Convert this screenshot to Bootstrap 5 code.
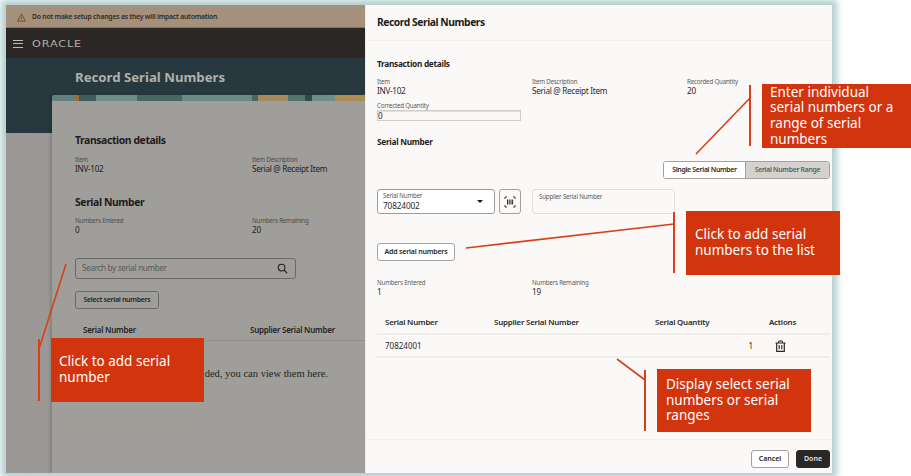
<!doctype html>
<html lang="en">
<head>
<meta charset="utf-8">
<title>Record Serial Numbers</title>
<link href="https://cdn.jsdelivr.net/npm/bootstrap@5.3.0/dist/css/bootstrap.min.css" rel="stylesheet">
<style>
html,body{margin:0;height:476px;overflow:hidden;background:#fff}
body{font-family:"Noto Sans","Open Sans",sans-serif;color:#2b2826}
.stage{position:relative;width:911px;height:476px;overflow:hidden;padding:5px 0 3px 6px}
.frame{width:826px;height:468px;box-shadow:0 0 7px 5px #b1cdcd;background:#fbf9f8}
.pagepane{width:359px;background:#9b9795;background-image:repeating-radial-gradient(circle at 40px 350px,rgba(255,255,255,.016) 0 1px,transparent 1px 3px);overflow:hidden}
.warnbar{height:23px;background:#a4907b;color:#2e2a26;font-size:6.8px;letter-spacing:-.2px;font-weight:600;padding:2px 0 0 11px;gap:6px;border-bottom:1px solid #857462}
.warnbar svg{width:9px;height:9px}
.oraclebar{height:30px;background:#2b2724;padding:1px 0 0 7px;gap:9px}
.burger{width:10px;height:8px;border-top:1px solid #bdbbb8;border-bottom:1px solid #bdbbb8}
.burger::after{content:"";display:block;height:1px;background:#bdbbb8;margin-top:2.5px}
.wordmark{font-family:"DejaVu Sans",sans-serif;font-size:8.6px;letter-spacing:.7px;color:#b4b2af;line-height:10px;display:inline-block;transform:scaleX(1.3);transform-origin:left center}
.herozone{height:75px;background:#27393e;padding:9px 0 0 69px}
.herotitle{color:#b1b0ab;font-size:13.2px;font-weight:700;line-height:20px;margin:0}
.sheet{margin:-38px 0 0 46px;height:378px;background:#a09e9b;box-shadow:-2px 0 3px rgba(0,0,0,.15);padding-left:23px;border-radius:3px 0 0 0;overflow:hidden}
.strip{height:6px;margin-left:-23px;background:linear-gradient(90deg,#62807b 0 24px,#a8642f 24px 27px,#3f5c5c 27px 44px,#6f8d86 44px 85px,#4a6663 85px 130px,#6c8a83 130px 200px,#4a6663 200px 206px,#a58b5c 206px 236px,#557370 236px 253px,#2f4a4c 253px 260px,#6f8d86 260px 283px,#ad8f55 283px 100%)}
.bighead{font-size:10.4px;letter-spacing:-.4px;font-weight:700;line-height:14px;margin:32px 0 0;color:#1d1b1a}
.tri{display:grid}
.tri-left{grid-template-columns:177px 1fr;margin-top:8px}
.tri-right{grid-template-columns:155px 155px 1fr}
.lbl{font-size:6.2px;letter-spacing:-.2px;line-height:9px;color:#5c5a58}
.val{font-size:8.2px;letter-spacing:-.3px;line-height:10px;color:#2b2826}
.sheet .lbl{color:#4e4c4a}
.sheet .val{color:#242220}
.bighead-next{margin-top:21px}
.tri-gap{margin-top:7px}
.searchbox{width:221px;height:21px;margin-top:23px;border:1px solid #6c6a68;border-radius:3px;padding:0 7px 0 6px;font-size:8.2px;letter-spacing:-.35px;color:#5a5856}
.searchbox svg{width:11px;height:11px}
.ghostbtn{font-family:inherit;background:transparent;border:1px solid #6c6a68;border-radius:3px;font-size:7px;letter-spacing:-.3px;font-weight:600;height:18px;width:84px;padding:0;color:#242220;margin-top:12px}
.sheethead{margin-top:11px;padding:0 0 0 8px;border-bottom:1px solid #939190;height:21px;font-size:8px;letter-spacing:-.25px;font-weight:600;color:#242220}
.sheethead span:first-child{width:167px}
.emptynote{font-family:"Liberation Serif",serif;font-size:10.5px;line-height:12px;margin-top:27px;text-align:right;padding-right:37px;color:#242220}
.drawerpane{flex:1;background:#fbf9f8;border-left:1px solid #eeebe8;min-width:0}
.drawerhead{height:36px;border-bottom:1px solid #f3f0ed;padding-left:11px;font-size:10.3px;letter-spacing:-.45px;font-weight:700;color:#1d1b1a}
.drawerbody{padding:17px 2px 0 11px;flex:1}
.smallhead{font-size:8.3px;letter-spacing:-.3px;font-weight:700;line-height:12px;margin:0;color:#1f1d1c}
.infogap{margin-top:7px}
.qtylabel{margin-top:5px}
.qtybox{width:144px;height:11px;border:1px solid #cfccc9;box-shadow:inset 0 1px 1px #ddd;font-size:8.2px;line-height:10px;color:#2b2826}
.smallhead-next{margin-top:15px}
.segwrap{height:18px;margin-top:13px;border:1px solid #a3a19f;border-radius:3px;width:167px;overflow:hidden;font-size:6.9px;letter-spacing:-.3px;font-weight:600}
.segwrap>div{display:flex;align-items:center;justify-content:center}
.segon{width:82px;background:#fff;color:#2b2826;border-right:1px solid #a3a19f}
.segoff{flex:1;background:#d4d1ce;color:#605e5c}
.fieldrow{margin-top:10px}
.selbox{width:118px;height:25px;background:#fff;border:1px solid #9f9d9b;border-radius:3px;padding:0 11px 0 5px}
.selbox .lbl{line-height:8px}
.selbox .val{font-size:8.2px;letter-spacing:-.1px;line-height:11px}
.caret{width:0;height:0;border-left:3px solid transparent;border-right:3px solid transparent;border-top:3px solid #1d1b1a}
.scanbtn{width:22px;height:25px;margin-left:4px;background:#fbf9f8;border:1px solid #a3a19f;border-radius:3px}
.scanbtn svg{width:12px;height:12px}
.supbox{width:143px;height:25px;margin-left:11px;background:#fbf9f8;border:1px solid #e2dfdc;border-radius:3px;padding:2px 6px}
.addbtn{font-family:inherit;display:block;width:78px;height:18px;padding:0;margin-top:29px;background:#fff;border:1px solid #a3a19f;border-radius:3px;font-size:7px;letter-spacing:-.2px;font-weight:600;color:#2b2826}
.countrow{margin-top:17px}
.datatable{width:453px;margin:13px 0 0;table-layout:fixed;font-size:8px;color:#2b2826;--bs-table-bg:transparent}
.datatable th,.datatable td{padding:0 0 0 8px;border-bottom:2px solid #f0edea;vertical-align:middle;box-shadow:none}
.datatable th{height:24px;font-weight:600;font-size:7.9px;letter-spacing:-.2px;padding-top:2px}
.datatable td{height:23px;padding-top:1px}
.datatable td.qtycell{padding-right:8px}
.datatable td svg{width:11px;height:12px;display:block;margin-left:6px}
.drawerfoot{height:34px;border-top:1px solid #f3f0ed;padding:10px 2px 0 0;gap:7px}
.cancelbtn,.donebtn{font-family:inherit;height:18px;padding:0;border-radius:3px;font-size:7px;font-weight:600}
.cancelbtn{width:38px;background:#fff;border:1px solid #a3a19f;color:#2b2826}
.donebtn{width:34px;background:#2b2724;border:1px solid #2b2724;color:#e6e3e0}
.callout{position:absolute;background:#d2350e;color:#fff;font-size:13.5px;line-height:15.7px;display:flex;flex-direction:column;justify-content:center;padding-left:8px}
.call-a{left:51px;top:338px;width:153px;height:64px}
.call-b{left:762px;top:84px;width:149px;height:64px}
.call-c{left:686px;top:211px;width:154px;height:64px;padding-left:9px}
.call-d{left:657px;top:369px;width:154px;height:63px;padding-left:9px}
.leaders{position:absolute;left:0;top:0;width:911px;height:476px;pointer-events:none}
</style>
</head>
<body>
<div class="stage">
  <div class="frame d-flex">
    <div class="pagepane d-flex flex-column flex-shrink-0">
      <div class="warnbar d-flex align-items-center">
        <svg viewBox="0 0 10 10"><path d="M5 1 9.4 9H.6Z" fill="none" stroke="#7e4c1e" stroke-width="1.1"/><path d="M5 4v2.6M5 7.3v.8" stroke="#7e4c1e" stroke-width=".9"/></svg>
        <span>Do not make setup changes as they will impact automation</span>
      </div>
      <div class="oraclebar d-flex align-items-center">
        <div class="burger"></div>
        <span class="wordmark">ORACLE</span>
      </div>
      <div class="herozone"><h1 class="herotitle">Record Serial Numbers</h1></div>
      <div class="sheet">
        <div class="strip"></div>
        <h2 class="bighead">Transaction details</h2>
        <div class="tri tri-left">
          <div><div class="lbl">Item</div><div class="val">INV-102</div></div>
          <div><div class="lbl">Item Description</div><div class="val">Serial @ Receipt Item</div></div>
        </div>
        <h2 class="bighead bighead-next">Serial Number</h2>
        <div class="tri tri-left tri-gap">
          <div><div class="lbl">Numbers Entered</div><div class="val">0</div></div>
          <div><div class="lbl">Numbers Remaining</div><div class="val">20</div></div>
        </div>
        <div class="searchbox d-flex align-items-center justify-content-between">
          <span>Search by serial number</span>
          <svg viewBox="0 0 12 12"><circle cx="5" cy="5" r="3.7" fill="none" stroke="#242220" stroke-width="1.2"/><path d="m7.8 7.8 3.2 3.2" stroke="#242220" stroke-width="1.4"/></svg>
        </div>
        <button type="button" class="ghostbtn">Select serial numbers</button>
        <div class="sheethead d-flex align-items-center"><span>Serial Number</span><span>Supplier Serial Number</span></div>
        <p class="emptynote">ded, you can view them here.</p>
      </div>
    </div>
    <div class="drawerpane d-flex flex-column">
      <div class="drawerhead d-flex align-items-center">Record Serial Numbers</div>
      <div class="drawerbody">
        <h2 class="smallhead">Transaction details</h2>
        <div class="tri tri-right infogap">
          <div><div class="lbl">Item</div><div class="val">INV-102</div></div>
          <div><div class="lbl">Item Description</div><div class="val">Serial @ Receipt Item</div></div>
          <div><div class="lbl">Recorded Quantity</div><div class="val">20</div></div>
        </div>
        <div class="lbl qtylabel">Corrected Quantity</div>
        <div class="qtybox">0</div>
        <h2 class="smallhead smallhead-next">Serial Number</h2>
        <div class="d-flex justify-content-end">
          <div class="segwrap d-flex"><div class="segon">Single Serial Number</div><div class="segoff">Serial Number Range</div></div>
        </div>
        <div class="d-flex fieldrow">
          <div class="selbox d-flex align-items-center justify-content-between">
            <div><div class="lbl">Serial Number</div><div class="val">70824002</div></div>
            <div class="caret"></div>
          </div>
          <div class="scanbtn d-flex align-items-center justify-content-center">
            <svg viewBox="0 0 12 12" fill="none" stroke="#2b2826"><path d="M1 3V1h2M9 1h2v2M11 9v2H9M3 11H1V9" stroke-width=".9"/><path d="M3.5 3.5v5M5.2 3.5v5M7 3.5v5M8.6 3.5v5" stroke-width="1"/></svg>
          </div>
          <div class="supbox"><div class="lbl">Supplier Serial Number</div></div>
        </div>
        <button type="button" class="addbtn">Add serial numbers</button>
        <div class="tri tri-right countrow">
          <div><div class="lbl">Numbers Entered</div><div class="val">1</div></div>
          <div><div class="lbl">Numbers Remaining</div><div class="val">19</div></div>
        </div>
        <table class="table datatable">
          <colgroup><col style="width:109px"><col style="width:161px"><col style="width:114px"><col></colgroup>
          <thead><tr><th>Serial Number</th><th>Supplier Serial Number</th><th>Serial Quantity</th><th>Actions</th></tr></thead>
          <tbody><tr><td>70824001</td><td></td><td class="text-end qtycell">1</td><td>
            <svg viewBox="0 0 11 12" fill="none" stroke="#2b2826"><path d="M.5 3h10M3.7 3V1h3.6v2" stroke-width="1"/><path d="M1.7 3v8.4h7.6V3" stroke-width="1.2"/><path d="M4.2 5v4.2M6.8 5v4.2" stroke-width="1.1"/></svg>
          </td></tr></tbody>
        </table>
      </div>
      <div class="drawerfoot d-flex justify-content-end">
        <button type="button" class="cancelbtn">Cancel</button>
        <button type="button" class="donebtn">Done</button>
      </div>
    </div>
  </div>
  <svg class="leaders" viewBox="0 0 911 476" fill="none" stroke="#d9401a">
    <path d="M39 339V401M750 85V146M674 212V273M645 370V431" stroke-width="2"/>
    <path d="M39 349 66 264M750 98 696 154M674 224 466 248M645 380 617 359" stroke-width="1.6"/>
  </svg>
  <div class="callout call-a"><span>Click to add serial<br>number</span></div>
  <div class="callout call-b"><span>Enter individual<br>serial numbers or a<br>range of serial<br>numbers</span></div>
  <div class="callout call-c"><span>Click to add serial<br>numbers to the list</span></div>
  <div class="callout call-d"><span>Display select serial<br>numbers or serial<br>ranges</span></div>
</div>
</body>
</html>
